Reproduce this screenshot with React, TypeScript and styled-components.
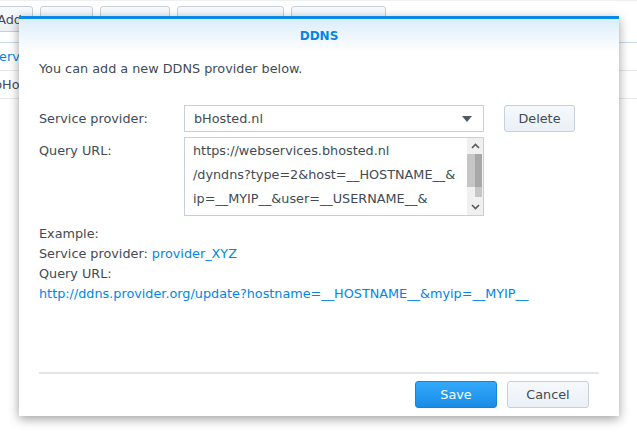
import React from "react";
import styled, { createGlobalStyle } from "styled-components";

const Global = createGlobalStyle`
  html, body { margin: 0; padding: 0; background: #ffffff; }
  body {
    font-family: "DejaVu Sans", Verdana, sans-serif;
    font-size: 12.8px;
    color: #414b55;
  }
`;

const Page = styled.div`
  position: relative;
  width: 637px;
  height: 433px;
  overflow: hidden;
  background: #fff;
  border-top: 1px solid #eef0f2;
  box-sizing: border-box;
`;

const Toolbar = styled.div`
  display: flex;
  gap: 7px;
  margin-left: -24px;
  padding-top: 5px;
  height: 26px;
`;

const ToolButton = styled.div<{ $w: number }>`
  width: ${(p) => p.$w}px;
  height: 26px;
  box-sizing: border-box;
  border: 1px solid #c6d0da;
  border-radius: 3px;
  background: linear-gradient(#f8fafc, #edf2f7);
  display: flex;
  align-items: center;
  justify-content: flex-end;
  padding-right: 10px;
`;

const GridHead = styled.div`
  height: 10px;
  border-bottom: 1px solid #c9dbea;
`;

const GridRow = styled.div<{ $link?: boolean }>`
  height: 27px;
  border-bottom: 1px solid #e6e9ec;
  display: flex;
  align-items: center;
  margin-left: ${(p) => (p.$link ? "-9px" : "-6px")};
  color: ${(p) => (p.$link ? "#0086e5" : "#414b55")};
`;

const Dialog = styled.div`
  position: absolute;
  left: 19px;
  top: 15px;
  width: 600px;
  height: 400px;
  background: #fff;
  border-top: 3px solid #0a8ae6;
  box-sizing: border-box;
  box-shadow: 0 3px 10px rgba(0, 0, 0, 0.38);
  display: flex;
  flex-direction: column;
`;

const Header = styled.div`
  height: 33px;
  flex: none;
  background: linear-gradient(#dbedfc, #ffffff);
  display: flex;
  justify-content: center;
  padding-top: 10px;
  box-sizing: border-box;
  font-weight: bold;
  color: #0086e5;
  font-size: 12px;
  line-height: 14px;
`;

const Body = styled.div`
  flex: 1;
  padding: 7px 20px 0 20px;
  display: flex;
  flex-direction: column;
`;

const Intro = styled.div`
  line-height: 20px;
`;

const Form = styled.div`
  margin-top: 26px;
  display: grid;
  grid-template-columns: 125px 300px auto;
  column-gap: 20px;
  row-gap: 5px;
  align-items: start;
`;

const Label = styled.div`
  line-height: 27px;
`;

const Select = styled.div`
  height: 27px;
  box-sizing: border-box;
  border: 1px solid #c6d0da;
  display: flex;
  align-items: center;
  padding: 0 10px 0 9px;
  justify-content: space-between;
`;

const Caret = styled.span`
  width: 0;
  height: 0;
  border-left: 5px solid transparent;
  border-right: 5px solid transparent;
  border-top: 6px solid #505a64;
  margin-right: 1px;
`;

const Button = styled.div<{ $primary?: boolean }>`
  width: 82px;
  height: 27px;
  box-sizing: border-box;
  border-radius: 3px;
  border: 1px solid ${(p) => (p.$primary ? "#1a82d4" : "#c6d0da")};
  background: ${(p) =>
    p.$primary
      ? "linear-gradient(#33a9fb, #1a8ce6)"
      : "linear-gradient(#f6f9fc, #eaf0f6)"};
  color: ${(p) => (p.$primary ? "#ffffff" : "#414b55")};
  display: flex;
  align-items: center;
  justify-content: center;
`;

const DeleteButton = styled(Button)`
  width: 71px;
`;

const TextArea = styled.div`
  height: 79px;
  box-sizing: border-box;
  border: 1px solid #c6d0da;
  display: flex;
`;

const TextLines = styled.div`
  flex: 1;
  padding: 1px 0 0 8px;
  line-height: 24px;
  white-space: nowrap;
  overflow: hidden;
`;

const Scrollbar = styled.div`
  width: 16px;
  background: #f0f0f0;
  display: flex;
  flex-direction: column;
  align-items: stretch;
`;

const Arrow = styled.div`
  height: 16px;
  display: flex;
  align-items: center;
  justify-content: center;
`;

const Track = styled.div`
  flex: 1;
  display: flex;
  flex-direction: column;
  padding: 0 1px 0 0;
`;

const Thumb = styled.div`
  height: 33px;
  display: flex;
`;

const ThumbLight = styled.div`
  width: 8px;
  background: #c6c6c6;
`;

const ThumbDark = styled.div`
  flex: 1;
  background: #a8a8a8;
`;

const ThumbTail = styled.div`
  height: 10px;
  margin-left: 8px;
  background: #c6c6c6;
`;

const Example = styled.div`
  margin-top: 8px;
  line-height: 20px;
`;

const Link = styled.span`
  color: #0086e5;
`;

const Footer = styled.div`
  flex: none;
  margin: 0 20px;
  border-top: 2px solid #e3e6e9;
  height: 44px;
  box-sizing: border-box;
  display: flex;
  justify-content: flex-end;
  align-items: flex-start;
  gap: 10px;
  padding: 7px 10px 0 0;
`;

const Chevron = ({ up }: { up?: boolean }) => (
  <svg width="9" height="6" viewBox="0 0 9 6">
    <path
      d={up ? "M1 5 L4.5 1.5 L8 5" : "M1 1 L4.5 4.5 L8 1"}
      fill="none"
      stroke="#5a5a5a"
      strokeWidth="1.6"
    />
  </svg>
);

export default function App() {
  return (
    <>
      <Global />
      <Page>
        <Toolbar>
          <ToolButton $w={57}>Add</ToolButton>
          <ToolButton $w={53} />
          <ToolButton $w={70} />
          <ToolButton $w={107} />
          <ToolButton $w={95} />
        </Toolbar>
        <GridHead />
        <GridRow $link>Service provider</GridRow>
        <GridRow>bHosted.nl</GridRow>

        <Dialog>
          <Header>DDNS</Header>
          <Body>
            <Intro>You can add a new DDNS provider below.</Intro>
            <Form>
              <Label>Service provider:</Label>
              <Select>
                <span>bHosted.nl</span>
                <Caret />
              </Select>
              <DeleteButton>Delete</DeleteButton>
              <Label>Query URL:</Label>
              <TextArea>
                <TextLines>
                  <div>https://webservices.bhosted.nl</div>
                  <div>/dyndns?type=2&amp;host=__HOSTNAME__&amp;</div>
                  <div>ip=__MYIP__&amp;user=__USERNAME__&amp;</div>
                </TextLines>
                <Scrollbar>
                  <Arrow>
                    <Chevron up />
                  </Arrow>
                  <Track>
                    <Thumb>
                      <ThumbLight />
                      <ThumbDark />
                    </Thumb>
                    <ThumbTail />
                  </Track>
                  <Arrow>
                    <Chevron />
                  </Arrow>
                </Scrollbar>
              </TextArea>
            </Form>
            <Example>
              <div>Example:</div>
              <div>
                Service provider: <Link>provider_XYZ</Link>
              </div>
              <div>Query URL:</div>
              <div>
                <Link>
                  http://ddns.provider.org/update?hostname=__HOSTNAME__&amp;myip=__MYIP__
                </Link>
              </div>
            </Example>
          </Body>
          <Footer>
            <Button $primary>Save</Button>
            <Button>Cancel</Button>
          </Footer>
        </Dialog>
      </Page>
    </>
  );
}
